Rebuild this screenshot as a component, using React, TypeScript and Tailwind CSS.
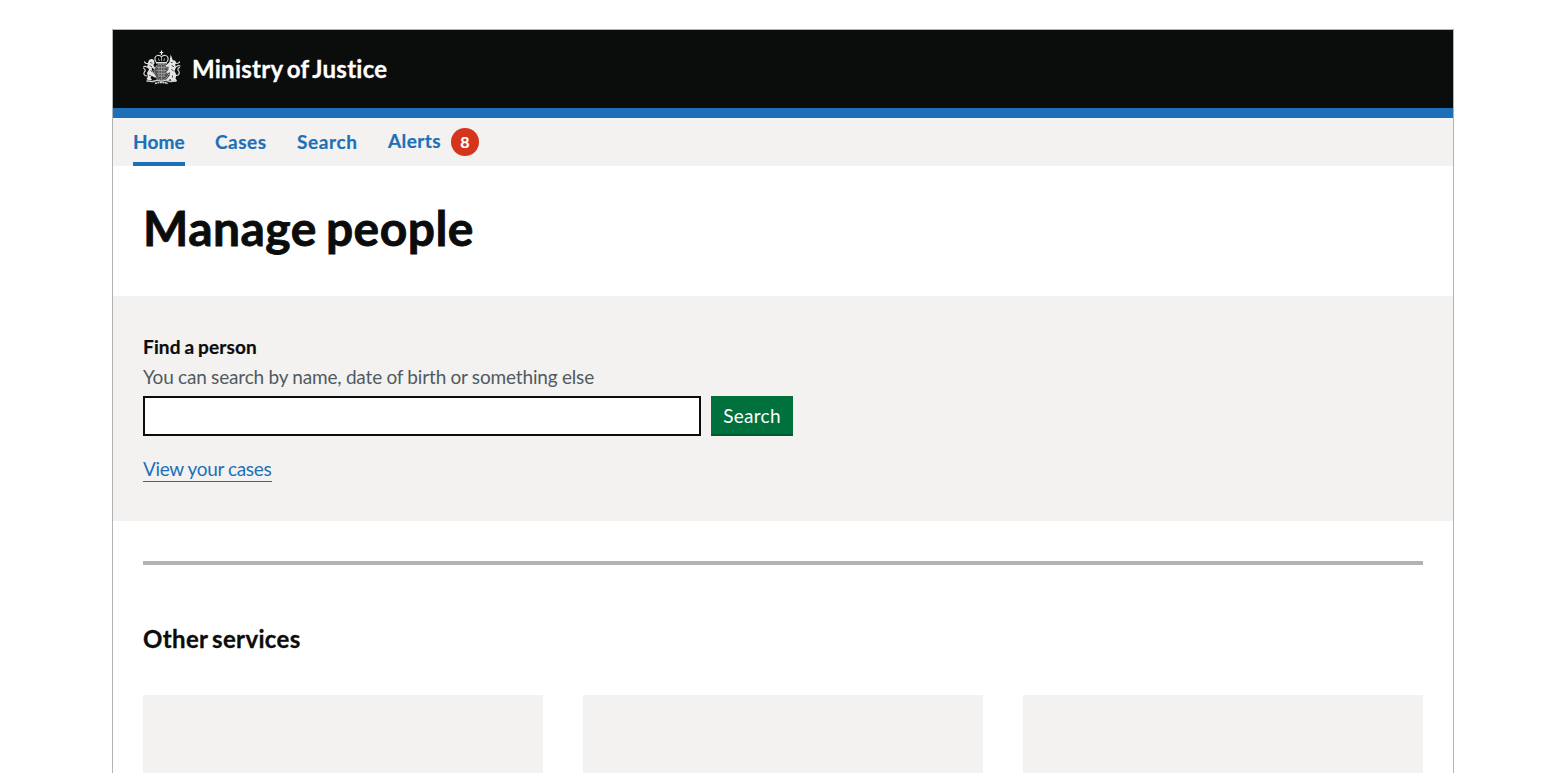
function Crest() {
  return (
    <svg width="40" height="36" viewBox="0 0 40 36" fill="none" aria-hidden="true" className="mb-0.5 shrink-0">
      {/* crown */}
      <path d="M19.500 .5v4.500M17.700 2.500h3.600" stroke="#eee" strokeWidth="1.200" />
      <path d="M14 12c-2-3-1.300-6 1.500-6.500 1.700-.3 3.200.2 4 1.500.8-1.300 2.300-1.800 4-1.500 2.800.5 3.500 3.500 1.500 6.500" stroke="#d4d4d4" strokeWidth="1.200" />
      <path d="M19.500 7v4M16.500 8.500l.7 2.500M22.500 8.500l-.7 2.500" stroke="#b4b4b4" strokeWidth=".9" />
      <path d="M14 12.800h11" stroke="#eee" strokeWidth="1.500" />
      {/* shield and garter */}
      <ellipse cx="19.500" cy="22" rx="7.500" ry="8" fill="#555" stroke="#a4a4a4" strokeWidth="1.200" strokeDasharray="1.300 .6" />
      <path d="M15 17.500h9M14.500 20.500h10M15 23.500h9M16 26h7M17 16v11M19.500 15v14M22 16v11" stroke="#aaa" strokeWidth=".7" />
      {/* lion */}
      <path d="M6.500 11c1-2.500 4.500-2.800 5.500-.5l.6 2.500-1.200 2 1.700 3-1 1.200-2.500-1.900.5 3.200 2 3.500 2 2.500-1 1.200-3.500-2-1 2.300 1.500 2H6l-1.500-1 1.500-2.500-1-3.500 2-3.500-1.800-3z" fill="#e4e4e4" />
      <path d="M8 12.500l2.500.7M7.500 15.500l2.500 1.200M8.500 20l1.800 2.300M7 25l2 1" stroke="#333" strokeWidth=".8" />
      <path d="M5 26c-2.500 0-3.800-2-2.700-4M2.300 22c1.700-1.500.8-3-.5-3.500M6 17.500l-3-1.300L1.500 17M6 13.500H4L2.500 12" stroke="#d8d8d8" strokeWidth="1.200" strokeLinecap="round" />
      {/* unicorn */}
      <path d="M28.700 4.500l2 5.500 2.500.7 1.200 2.300-1.200 1.500.8 3-1.500 3.500 2 4-1 3.500 1.500 2-1.500 1h-4l-1-2.500-3.500 2-1-1.200 3.300-3.800.7-4-3 1.500-.8-1.300 2.500-2.700-.3-3-2 .5-.5-1.700 3.500-3z" fill="#e4e4e4" />
      <path d="M29 12.500h1.500M29.500 15.500l2.500 1.200M29.500 19l2 2.300M30.500 25.500v2" stroke="#333" strokeWidth=".9" />
      <path d="M34 25.500c3 0 3.800-2 2.800-4.500M36.800 21c-1.800-1.300-.8-3 .7-3.300M33.500 17l3-1.500 1.500.5M34 13.500l2.500-.5 1-1" stroke="#d8d8d8" strokeWidth="1.200" strokeLinecap="round" />
      {/* compartment and motto */}
      <path d="M4.500 31.300c2.500-1 5 .7 7 0l3.500-1 4.500 1 4.500-1 3.500 1c2 .7 4.500-1 7 0" stroke="#ccc" strokeWidth="1.500" />
      <path d="M13 33.500c3-1.300 10-1.300 13 0" stroke="#e0e0e0" strokeWidth="1.400" strokeDasharray="2 .5" />
    </svg>
  );
}

const links = [
  { label: "Cases", style: "ml-[30px] w-[52px] tracking-[0.5px]" },
  { label: "Search", style: "ml-[30px] w-[61px] tracking-[0.6px]" },
];

export default function App() {
  return (
    <div className="h-[773px] overflow-hidden bg-white pt-[29px] font-[Lato,sans-serif] text-[#0b0c0c]">
      <div className="mx-auto h-[800px] w-[1342px] border border-[#b1b4b6]">
        <header className="flex h-[88px] items-center border-b-10 border-[#1d70b8] bg-[#0b0c0c] pl-[29px] text-white">
          <Crest />
          <span className="ml-[10px] text-2xl font-bold tracking-[0.25px] whitespace-nowrap [word-spacing:-2px] [-webkit-text-stroke:0.3px]">Ministry of Justice</span>
        </header>
        <nav className="flex h-12 bg-[#f3f2f1] pl-5 text-[19px] leading-[48px] font-bold whitespace-nowrap text-[#1d70b8] [-webkit-text-stroke:0.2px]">
          <a className="h-12 w-[52px] border-b-4 border-[#1d70b8] tracking-[0.1px]">Home</a>
          {links.map((l) => (
            <a key={l.label} className={l.style}>{l.label}</a>
          ))}
          <a className="ml-[30px] flex items-center">
            <span className="w-[53px] pb-0.5 leading-[44px] tracking-[0.4px]">Alerts</span>
            <span className="ml-[10px] h-7 w-7 rounded-full bg-[#d4351c] text-center text-base leading-7 font-bold text-white">8</span>
          </a>
        </nav>
        <main>
          <div className="h-[130px] px-[30px] pt-[37px]">
            <h1 className="text-5xl leading-[50px] font-bold tracking-[0.45px] whitespace-nowrap [word-spacing:-3px] [-webkit-text-stroke:0.8px]">Manage people</h1>
          </div>
          <section className="h-[225px] bg-[#f3f2f1] px-[30px] pt-[38px] text-[19px] leading-[25px] whitespace-nowrap">
            <label htmlFor="person" className="block leading-[25px] font-bold tracking-[0.15px] [word-spacing:-1px] [-webkit-text-stroke:0.2px]">Find a person</label>
            <div className="mt-[5px] tracking-[-0.16px] text-[#505a5f] [word-spacing:-0.3px]">You can search by name, date of birth or something else</div>
            <div className="mt-[7px] flex gap-[10px]">
              <input id="person" className="h-10 w-[558px] border-2 border-[#0b0c0c] bg-white px-1" />
              <button className="h-10 w-[82px] border-b-2 border-[#005a30] bg-[#00703c] tracking-[0.3px] text-white">Search</button>
            </div>
            <a className="mt-5 block h-[26px] w-[129px] border-b border-[#1d70b8] tracking-[-0.35px] text-[#1d70b8]">View your cases</a>
          </section>
          <div className="px-[30px] pt-10">
            <hr className="h-1 border-0 bg-[#b1b4b6]" />
            <h2 className="mt-[59px] text-2xl leading-[30px] font-bold tracking-[0.35px] [word-spacing:-2px] [-webkit-text-stroke:0.3px]">Other services</h2>
            <div className="mt-[41px] grid grid-cols-3 gap-10">
              <div className="h-40 bg-[#f3f2f1]" />
              <div className="h-40 bg-[#f3f2f1]" />
              <div className="h-40 bg-[#f3f2f1]" />
            </div>
          </div>
        </main>
      </div>
    </div>
  );
}
